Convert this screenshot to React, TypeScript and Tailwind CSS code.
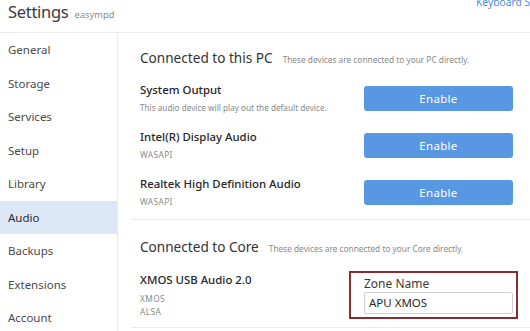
const navItems = [
  'General',
  'Storage',
  'Services',
  'Setup',
  'Library',
  'Audio',
  'Backups',
  'Extensions',
  'Account',
];

const pcDevices = [
  { name: 'System Output', sub: 'This audio device will play out the default device.', small: false },
  { name: 'Intel(R) Display Audio', sub: 'WASAPI', small: true },
  { name: 'Realtek High Definition Audio', sub: 'WASAPI', small: true },
];

function SectionTitle({ title, note }: { title: string; note: string }) {
  return (
    <div className="flex items-baseline gap-[10px]">
      <h2 className="text-[13.6px] leading-[18px] text-[#333]">{title}</h2>
      <span className="text-[8.3px] text-[#8a8a8a]">{note}</span>
    </div>
  );
}

export default function App() {
  return (
    <div className="w-[530px] h-[331px] overflow-hidden bg-white font-['Noto_Sans',sans-serif] text-[#333]">
      <header className="h-[33px] border-b border-[#ececec] flex items-start overflow-hidden">
        <div className="w-[476px] shrink-0 pl-[8px] flex items-baseline gap-[6px]">
          <span className="text-[16.5px] leading-[23px] tracking-[-0.3px] text-[#3a3a3a]">Settings</span>
          <span className="text-[9.4px] text-[#8c8c8c]">easympd</span>
        </div>
        <span className="shrink-0 whitespace-nowrap -mt-[5px] text-[10.3px] leading-[15px] text-[#4d8fd6]">
          Keyboard Shortcuts
        </span>
      </header>

      <div className="flex">
        <nav className="w-[118px] shrink-0 border-r border-[#ececec] h-[298px]">
          {navItems.map((item) => (
            <div
              key={item}
              className={
                item === 'Audio'
                  ? 'h-[33.5px] flex items-center pl-[8px] text-[11.5px] bg-[#dce8f7] text-[#2a2a2a]'
                  : 'h-[33.5px] flex items-center pl-[8px] text-[11.5px] text-[#4a4a4a]'
              }
            >
              {item}
            </div>
          ))}
        </nav>

        <main className="flex-1 pl-[13px]">
          <section className="border-b border-[#ececec] pl-[9px] pr-[17px] pt-[16px] pb-[11px]">
            <SectionTitle title="Connected to this PC" note="These devices are connected to your PC directly." />
            <div className="mt-[15px]">
              {pcDevices.map((d, i) => (
                <div
                  key={d.name}
                  className={i < 2 ? 'h-[47px] flex justify-between items-start' : 'flex justify-between items-start'}
                >
                  <div>
                    <div className="text-[11.4px] leading-[16px] font-medium text-[#262626]">{d.name}</div>
                    <div
                      className={
                        d.small
                          ? 'mt-[4px] text-[8.3px] tracking-[0.4px] leading-[12px] text-[#8a8a8a]'
                          : 'mt-[4px] text-[8.2px] leading-[12px] text-[#8a8a8a]'
                      }
                    >
                      {d.sub}
                    </div>
                  </div>
                  <button className="mt-[4px] w-[149px] h-[25px] rounded-[3px] bg-[#5897e2] text-white text-[11.5px] tracking-[0.3px]">
                    Enable
                  </button>
                </div>
              ))}
            </div>
          </section>

          <section className="border-b border-[#ececec] pl-[9px] pr-[17px] pt-[18px] pb-[9px]">
            <SectionTitle title="Connected to Core" note="These devices are connected to your Core directly." />
            <div className="mt-[16px] flex justify-between items-start">
              <div>
                <div className="text-[11.4px] leading-[16px] font-medium text-[#262626]">XMOS USB Audio 2.0</div>
                <div className="mt-[4px] text-[8.3px] tracking-[0.4px] leading-[13px] text-[#8a8a8a]">XMOS</div>
                <div className="text-[8.3px] tracking-[0.4px] leading-[13px] text-[#8a8a8a]">ALSA</div>
              </div>
              <div className="relative mt-[4px] w-[149px]">
                <div className="text-[12px] leading-[16px] text-[#3a3a3a]">Zone Name</div>
                <div className="h-[22px] border border-[#cfcfcf] rounded-[2px] flex items-center pl-[4px] text-[11.5px] text-[#2a2a2a]">
                  APU XMOS
                </div>
                <div className="absolute -top-[5px] -bottom-[5px] -left-[15px] -right-[5px] border-2 border-[#8b2c2e] pointer-events-none" />
              </div>
            </div>
          </section>
        </main>
      </div>
    </div>
  );
}
